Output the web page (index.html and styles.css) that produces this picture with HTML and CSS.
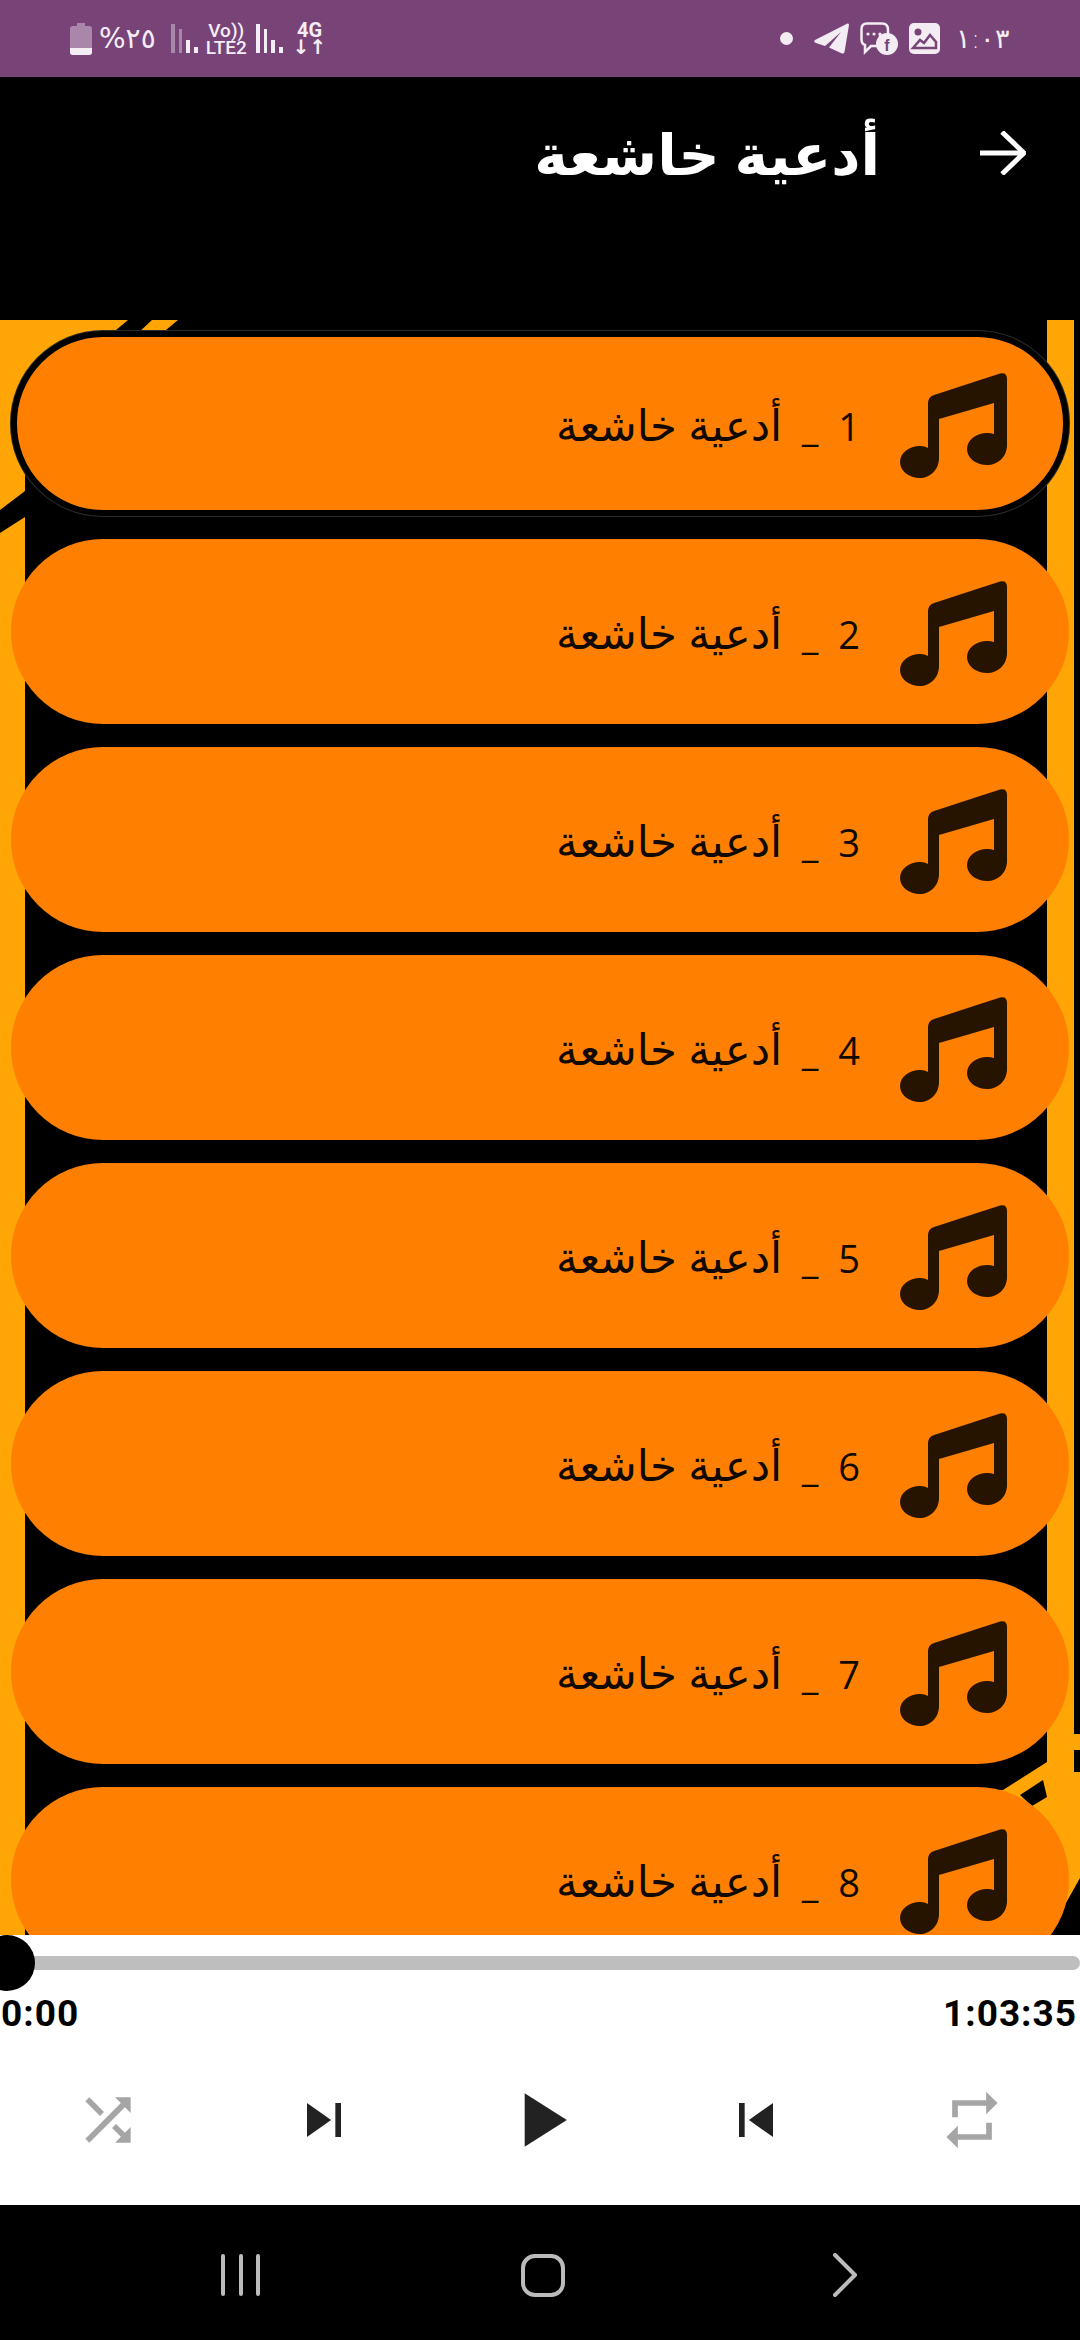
FILE: index.html
```html
<!DOCTYPE html>
<html lang="ar">
<head>
    <meta charset="UTF-8">
    <meta name="viewport" content="width=device-width, initial-scale=1.0">
    <title>أدعية خاشعة</title>
    <link rel="stylesheet" href="styles.css">
</head>
<body>
<svg class="defs" width="0" height="0">
    <symbol id="note" viewBox="0 0 107 106">
        <path d="M28 30Q28 24 34 22L100 .6Q107-1 107 6V72C107 84 98 92 87 92 76 92 67 85 67 76 67 67 76 60 87 60Q91 60 94 61V30L39 46V85C39 97 30 105 20 105 9 105 0 98 0 89 0 80 9 73 20 73Q25 73 28 75Z"/>
    </symbol>
</svg>
<div class="app">
    <div class="status">
        <div class="status-left">
            <svg class="battery" width="22" height="32" viewBox="0 0 22 32">
                <path d="M7 0h8v3h4q3 0 3 3v23q0 3-3 3H3q-3 0-3-3V6q0-3 3-3h4z" fill="#ab86ab"/>
                <path d="M0 25h22v4q0 3-3 3H3q-3 0-3-3z" fill="#f5edf5"/>
            </svg>
            <span class="battery-text" dir="ltr">%٢٥</span>
            <svg class="bars" width="27" height="30" viewBox="0 0 27 30">
                <rect x="0" y="0" width="4" height="29" fill="#a888a8"/>
                <rect x="8" y="5" width="3" height="24" fill="#a888a8"/>
                <rect x="15" y="16" width="4" height="13" fill="#f5edf5"/>
                <rect x="23" y="23" width="4" height="6" fill="#f5edf5"/>
            </svg>
            <div class="volte">Vo))<br>LTE2</div>
            <svg class="bars" width="27" height="30" viewBox="0 0 27 30">
                <rect x="0" y="0" width="4" height="29" fill="#f5edf5"/>
                <rect x="8" y="5" width="3" height="24" fill="#f5edf5"/>
                <rect x="15" y="16" width="4" height="13" fill="#f5edf5"/>
                <rect x="23" y="23" width="4" height="6" fill="#f5edf5"/>
            </svg>
            <div class="net">4G<br>↓↑</div>
        </div>
        <div class="status-right">
            <span class="dot"></span>
            <svg width="35" height="31" viewBox="0 0 35 31">
                <path d="M33.500.5 1 17Q-1 19 2 20L11 23 27 9 15 24.500 28 30.500Q30 31 30.500 29L35 2Q35 0 33.500.5Z" fill="#f3ecf3"/>
            </svg>
            <svg width="38" height="33" viewBox="0 0 38 33">
                <path d="M7 1.500H22Q28 1.500 28 8V14H20V24H11L5 30V23Q1.500 22 1.500 17V7Q1.500 1.500 7 1.500Z" fill="none" stroke="#f3ecf3" stroke-width="2.500"/>
                <circle cx="8" cy="12" r="1.600" fill="#f3ecf3"/>
                <circle cx="14" cy="12" r="1.600" fill="#f3ecf3"/>
                <circle cx="20" cy="12" r="1.600" fill="#f3ecf3"/>
                <circle cx="27" cy="22" r="11" fill="#f3ecf3"/>
                <text x="27" y="29" class="fb">f</text>
            </svg>
            <svg width="31" height="31" viewBox="0 0 31 31">
                <rect width="31" height="31" rx="5" fill="#f3ecf3"/>
                <circle cx="9" cy="9" r="3.500" fill="#784478"/>
                <path d="M4 25 11 17 15 20 21 12 27 19V25Z" fill="none" stroke="#784478" stroke-width="2.500"/>
            </svg>
            <span class="clock" dir="ltr">١:٠٣</span>
        </div>
    </div>

    <div class="toolbar" dir="rtl">
        <svg class="back" width="46" height="44" viewBox="0 0 46 44">
            <path d="M0 22H44M22 1 44 22 22 43" fill="none" stroke="#fff" stroke-width="5"/>
        </svg>
        <h1>أدعية خاشعة</h1>
    </div>

    <div class="list" dir="rtl">
        <svg class="list-bg" width="1080" height="1615" viewBox="0 320 1080 1615">
            <path d="M0 320H128L80 360V475H25V1935H0Z" fill="#ffa505"/>
            <path d="M152 320H178L160 335H136Z" fill="#ffa505"/>
            <path d="M0 510 25 491V517L0 533Z" fill="#000"/>
            <path d="M1047 320H1074V1772H1080V1878L1048 1935H1000V1790H1003L1047 1762Z" fill="#ffa505"/>
            <path d="M1043 1780 1020 1795 1032 1806 1047 1797Z" fill="#000"/>
            <path d="M1074 1734H1080V1750H1074Z" fill="#ffa505"/>
        </svg>
        <div class="track-row selected"><svg class="note"><use href="#note"/></svg><span class="label"><span class="num">1  _  </span>أدعية خاشعة</span></div>
        <div class="track-row"><svg class="note"><use href="#note"/></svg><span class="label"><span class="num">2  _  </span>أدعية خاشعة</span></div>
        <div class="track-row"><svg class="note"><use href="#note"/></svg><span class="label"><span class="num">3  _  </span>أدعية خاشعة</span></div>
        <div class="track-row"><svg class="note"><use href="#note"/></svg><span class="label"><span class="num">4  _  </span>أدعية خاشعة</span></div>
        <div class="track-row"><svg class="note"><use href="#note"/></svg><span class="label"><span class="num">5  _  </span>أدعية خاشعة</span></div>
        <div class="track-row"><svg class="note"><use href="#note"/></svg><span class="label"><span class="num">6  _  </span>أدعية خاشعة</span></div>
        <div class="track-row"><svg class="note"><use href="#note"/></svg><span class="label"><span class="num">7  _  </span>أدعية خاشعة</span></div>
        <div class="track-row"><svg class="note"><use href="#note"/></svg><span class="label"><span class="num">8  _  </span>أدعية خاشعة</span></div>
    </div>

    <div class="player">
        <div class="seek"><div class="thumb"></div></div>
        <div class="times"><span>0:00</span><span>1:03:35</span></div>
        <div class="controls">
            <svg class="ctl off" viewBox="0 0 24 24"><path d="M10.590 9.170 5.410 4 4 5.410l5.170 5.170 1.420-1.410zM14.500 4l2.040 2.040L4 18.590 5.410 20 17.960 7.460 20 9.500V4h-5.500zm.330 9.410-1.410 1.410 3.130 3.130L14.500 20H20v-5.500l-2.040 2.040-3.130-3.130z"/></svg>
            <svg class="ctl" viewBox="0 0 24 24"><path d="M6 18l8.500-6L6 6v12zM16 6v12h2V6h-2z"/></svg>
            <svg class="ctl play" viewBox="0 0 24 24"><path d="M8 5v14l11-7z"/></svg>
            <svg class="ctl" viewBox="0 0 24 24"><path d="M6 6h2v12H6zm3.500 6l8.500 6V6z"/></svg>
            <svg class="ctl off" viewBox="0 0 24 24"><path d="M7 7h10v3l4-4-4-4v3H5v6h2V7zm10 10H7v-3l-4 4 4 4v-3h12v-6h-2v4z"/></svg>
        </div>
    </div>

    <div class="nav">
        <svg width="42" height="42" viewBox="0 0 42 42" fill="none" stroke="#bbb" stroke-width="4" stroke-linecap="round">
            <path d="M3 2V40M21 2V40M38 2V40"/>
        </svg>
        <div class="home"></div>
        <svg width="26" height="44" viewBox="0 0 26 44" fill="none" stroke="#bbb" stroke-width="4" stroke-linecap="round" stroke-linejoin="round">
            <path d="M3 2 23 22 3 42"/>
        </svg>
    </div>
</div>
</body>
</html>
```

FILE: styles.css
```css
* {
    box-sizing: border-box;
}
body {
    margin: 0;
    background-color: #000;
    font-family: "Open Sans", "DejaVu Sans", sans-serif;
}
.defs {
    position: absolute;
}
.app {
    display: flex;
    flex-direction: column;
    width: 1080px;
    height: 2340px;
    overflow: hidden;
}

/* status bar */
.status {
    display: flex;
    flex: none;
    justify-content: space-between;
    align-items: center;
    height: 77px;
    padding: 0 70px;
    background-color: #784478;
    color: #f5edf5;
}
.status-left,
.status-right {
    display: flex;
    align-items: center;
}
.battery-text {
    margin: 0 15px 0 7px;
    font-family: "DejaVu Sans", sans-serif;
    font-size: 28px;
}
.volte {
    margin: 0 9px 0 8px;
    font-family: Roboto, sans-serif;
    font-size: 19px;
    font-weight: 500;
    line-height: 17px;
    text-align: center;
}
.net {
    margin-left: 10px;
    font-family: Roboto, "DejaVu Sans", sans-serif;
    font-size: 20px;
    font-weight: 700;
    line-height: 17px;
    text-align: center;
}
.status-right {
    gap: 11px;
}
.dot {
    width: 13px;
    height: 13px;
    margin-right: 10px;
    border-radius: 50%;
    background-color: #f3ecf3;
}
.fb {
    font-family: "Liberation Sans", sans-serif;
    font-size: 16px;
    font-weight: 700;
    fill: #784478;
    text-anchor: middle;
}
.clock {
    margin-left: 5px;
    font-family: "DejaVu Sans", sans-serif;
    font-size: 27px;
    font-weight: 300;
}

/* toolbar */
.toolbar {
    display: flex;
    flex: none;
    align-items: center;
    gap: 100px;
    height: 243px;
    padding: 0 54px 92px 0;
    background-color: #000;
    color: #fff;
}
.toolbar h1 {
    margin: 0;
    font-size: 57px;
    font-weight: 700;
}

/* list */
.list {
    position: relative;
    display: flex;
    flex-direction: column;
    flex: 1;
    min-height: 0;
    gap: 23px;
    padding: 11px 11px 0;
    overflow: hidden;
    background-color: #000;
}
.list-bg {
    position: absolute;
    top: 0;
    left: 0;
}
.track-row {
    position: relative;
    display: flex;
    flex: none;
    align-items: center;
    gap: 40px;
    height: 185px;
    padding-right: 62px;
    border-radius: 92px;
    background-color: #ff8000;
    color: #110800;
    font-size: 43.500px;
    line-height: 60px;
    white-space: pre;
}
.label {
    padding-top: 3px;
}
.num {
    font-size: 38px;
}
.track-row.selected {
    padding-right: 56px;
    border: 6px solid #000;
    box-shadow: 0 0 0 1px #2a2a2a;
}
.note {
    flex: none;
    width: 107px;
    height: 106px;
    margin-top: 4px;
    fill: #261400;
}

/* player */
.player {
    display: flex;
    flex: none;
    flex-direction: column;
    height: 270px;
    background-color: #fff;
}
.seek {
    position: relative;
    height: 14px;
    margin-top: 21px;
    border-radius: 0 7px 7px 0;
    background-color: #bebebe;
}
.thumb {
    position: absolute;
    top: -21px;
    left: -21px;
    width: 56px;
    height: 56px;
    border-radius: 50%;
    background-color: #000;
}
.times {
    display: flex;
    justify-content: space-between;
    height: 43px;
    margin-top: 22px;
    padding: 0 3px 0 1px;
    color: #000;
    font-family: Roboto, sans-serif;
    font-size: 37px;
    font-weight: 700;
    letter-spacing: 1px;
    line-height: 43px;
}
.controls {
    display: grid;
    grid-template-columns: repeat(5, 216px);
    flex: 1;
    align-items: center;
    justify-items: center;
}
.ctl {
    width: 68px;
    height: 68px;
    fill: #222;
}
.ctl.off {
    fill: #a5a5a5;
}
.ctl.play {
    width: 92px;
    height: 92px;
}

/* navigation bar */
.nav {
    display: grid;
    grid-template-columns: repeat(3, 302px);
    flex: none;
    height: 135px;
    justify-content: center;
    justify-items: center;
    align-content: start;
    align-items: center;
    padding: 48px 0 0 5px;
    background-color: #000;
}
.home {
    width: 44px;
    height: 43px;
    border: 4px solid #bbb;
    border-radius: 14px;
}
```
